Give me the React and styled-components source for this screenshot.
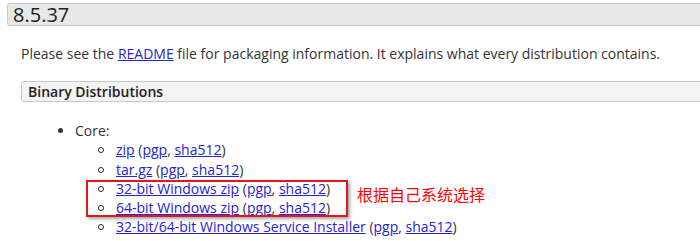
import React from "react";
import styled, { createGlobalStyle } from "styled-components";

const GlobalStyle = createGlobalStyle`
  html, body {
    margin: 0;
    padding: 0;
    overflow: hidden;
    background: #fff;
  }
  body {
    font-family: "Open Sans", "Noto Sans CJK SC", sans-serif;
    font-size: 14px;
    color: #333;
  }
`;

const subItems = [
  { label: "zip" },
  { label: "tar.gz" },
  { label: "32-bit Windows zip", mark: true },
  { label: "64-bit Windows zip", mark: true },
  { label: "32-bit/64-bit Windows Service Installer" },
];

const Download = ({ label }) => (
  <>
    <Link href="#">{label}</Link> (<Link href="#">pgp</Link>,{" "}
    <Link href="#">sha512</Link>)
  </>
);

const App = () => {
  const before = subItems.slice(0, 2);
  const marked = subItems.filter((i) => i.mark);
  const after = subItems.slice(4);

  return (
    <Page>
      <GlobalStyle />
      <VersionHeader>8.5.37</VersionHeader>
      <Section>
        <Para>
          Please see the <Link href="#">README</Link> file for packaging
          information. It explains what every distribution contains.
        </Para>
        <SubHeader>Binary Distributions</SubHeader>
        <TopList>
          <TopItem>
            Core:
            <SubList>
              {before.map((item) => (
                <SubItem key={item.label}>
                  <Download label={item.label} />
                </SubItem>
              ))}
              <MarkedRow>
                <RowGroup>
                  {marked.map((item) => (
                    <SubItem key={item.label}>
                      <Download label={item.label} />
                    </SubItem>
                  ))}
                  <Frame />
                </RowGroup>
                <Note>根据自己系统选择</Note>
              </MarkedRow>
              {after.map((item) => (
                <SubItem key={item.label}>
                  <Download label={item.label} />
                </SubItem>
              ))}
            </SubList>
          </TopItem>
          <TopItem>Full documentation:</TopItem>
        </TopList>
      </Section>
    </Page>
  );
};

const Page = styled.main`
  width: 760px;
  padding: 3px 0 0 7px;
`;

const VersionHeader = styled.h3`
  margin: 0;
  height: 21px;
  padding: 0 5px;
  background: #e8e8e8;
  border: 1px solid #c8c8c8;
  border-radius: 3px;
  font-size: 20px;
  font-weight: 400;
  line-height: 21px;
  color: #222;
`;

const Section = styled.section`
  padding-left: 14px;
`;

const Para = styled.p`
  margin: 18px 0 18px;
  line-height: 19px;
`;

const SubHeader = styled.h4`
  margin: 0;
  height: 19px;
  padding: 0 6px;
  background: #f3f3f3;
  border: 1px solid #c8c8c8;
  border-radius: 3px;
  font-size: 14px;
  font-weight: 600;
  line-height: 19px;
  color: #222;
`;

const TopList = styled.ul`
  margin: 19px 0 0;
  padding-left: 54px;
  line-height: 19.3px;
  list-style: disc;
`;

const TopItem = styled.li``;

const SubList = styled.div`
  padding-left: 41px;
`;

const SubItem = styled.div`
  position: relative;
  white-space: nowrap;

  &::before {
    content: "";
    position: absolute;
    left: -18px;
    top: 7px;
    width: 4px;
    height: 4px;
    border: 1px solid #222;
    border-radius: 50%;
  }
`;

const MarkedRow = styled.div`
  display: flex;
  align-items: flex-start;
`;

const RowGroup = styled.div`
  position: relative;
  width: 232px;
`;

const Frame = styled.div`
  position: absolute;
  top: 1px;
  left: -30px;
  width: 262px;
  height: 37px;
  box-sizing: border-box;
  border: 2px solid #e8141b;
  box-shadow: 2px 2px 3px rgba(0, 0, 0, 0.35);
  pointer-events: none;
`;

const Note = styled.span`
  margin: 5px 0 0 9px;
  font-family: "Noto Sans CJK SC", sans-serif;
  font-size: 16px;
  line-height: 20px;
  color: #f00;
`;

const Link = styled.a`
  color: #2323d8;
  text-decoration: underline;
`;

export default App;
